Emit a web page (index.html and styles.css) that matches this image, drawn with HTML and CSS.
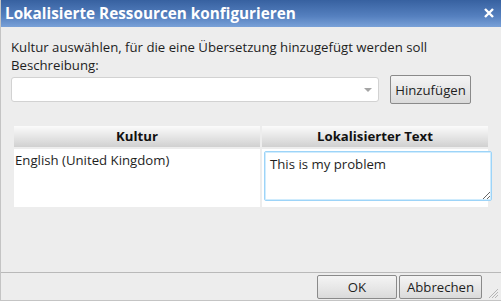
FILE: index.html
```html
<!DOCTYPE html>
<html lang="de">
<head>
    <meta charset="UTF-8">
    <title>Lokalisierte Ressourcen konfigurieren</title>
    <link rel="stylesheet" href="styles.css">
</head>
<body>
    <div class="dialog">
        <div class="titlebar">
            <span class="title">Lokalisierte Ressourcen konfigurieren</span>
            <svg class="close" width="10" height="10" viewBox="0 0 10 10">
                <path d="M1 1 L9 9 M9 1 L1 9" stroke="white" stroke-width="2.4" />
            </svg>
        </div>
        <div class="content">
            <div class="label">Kultur auswählen, für die eine Übersetzung hinzugefügt werden soll<br>Beschreibung:</div>
            <div class="add-row">
                <div class="combo">
                    <span class="arrow"></span>
                </div>
                <button class="btn add-btn">Hinzufügen</button>
            </div>
            <div class="grid">
                <div class="head">Kultur</div>
                <div class="head">Lokalisierter Text</div>
                <div class="cell">English (United Kingdom)</div>
                <div class="cell edit-cell">
                    <textarea class="text-edit">This is my problem</textarea>
                </div>
            </div>
        </div>
        <div class="footer">
            <button class="btn ok-btn">OK</button>
            <button class="btn cancel-btn">Abbrechen</button>
            <svg class="grip" width="12" height="12" viewBox="0 0 12 12">
                <path d="M11 2 L2 11 M11 5 L5 11 M11 8 L8 11" stroke="#b5b5b5" stroke-width="1" />
            </svg>
        </div>
    </div>
</body>
</html>
```

FILE: styles.css
```css
body {
    margin: 0;
    font-family: 'Open Sans', 'Noto Sans', sans-serif;
    font-size: 13.2px;
    color: #1e1e1e;
    background-color: #ededed;
}

.dialog {
    width: 501px;
    height: 301px;
    display: flex;
    flex-direction: column;
    box-sizing: border-box;
    border-left: 1px solid #c4c4c4;
    border-bottom: 1px solid #c4c4c4;
    overflow: hidden;
}

.titlebar {
    height: 27px;
    flex-shrink: 0;
    display: flex;
    align-items: center;
    justify-content: space-between;
    padding: 0 7px 0 5px;
    margin-left: -1px;
    background: linear-gradient(to bottom, #3761a0, #5580bf 60%, #79a1d8);
}

.title {
    color: white;
    font-weight: bold;
    font-size: 15.3px;
    margin-top: -1px;
}

.close {
    margin-top: -2px;
}

.content {
    flex-grow: 1;
    padding: 11px 0 0 10px;
}

.label {
    line-height: 18px;
}

.add-row {
    display: flex;
    align-items: center;
    gap: 11px;
    margin-top: 1px;
}

.combo {
    position: relative;
    width: 366px;
    height: 23px;
    background-color: white;
    border: 1px solid #d2d2d2;
    border-radius: 3px;
}

.arrow {
    position: absolute;
    right: 6px;
    top: 10px;
    border-left: 4px solid transparent;
    border-right: 4px solid transparent;
    border-top: 4px solid #a5a5a5;
}

.btn {
    font-family: 'Open Sans', 'Noto Sans', sans-serif;
    font-size: 13.2px;
    color: #1e1e1e;
    border: 1px solid #8a8a8a;
    border-radius: 2px;
    background: linear-gradient(to bottom, #f4f4f4, #e8e8e8 50%, #dadada);
    padding: 0;
}

.add-btn {
    width: 81px;
    height: 29px;
}

.grid {
    display: grid;
    grid-template-columns: 246px 226px;
    column-gap: 2px;
    row-gap: 2px;
    margin: 22px 0 0 3px;
}

.head {
    height: 21px;
    line-height: 21px;
    text-align: center;
    font-weight: bold;
    color: #111;
    background: linear-gradient(to bottom, #fbfbfb, #e6e6e6 50%, #d0d0d0);
}

.cell {
    height: 58px;
    background-color: white;
    padding: 2px 0 0 1px;
    box-sizing: border-box;
}

.edit-cell {
    padding: 2px 0 0 2px;
    overflow: visible;
}

.text-edit {
    width: 228px;
    height: 50px;
    box-sizing: border-box;
    resize: vertical;
    font-family: 'Open Sans', 'Noto Sans', sans-serif;
    font-size: 13.2px;
    color: #1e1e1e;
    border: 1px solid #9dd4f8;
    box-shadow: inset 0 0 0 1px #d0ecfd;
    border-radius: 2px;
    padding: 3px 5px;
    outline: none;
}

.footer {
    height: 28px;
    flex-shrink: 0;
    border-top: 1px solid #b9b9b9;
    display: flex;
    align-items: center;
    justify-content: flex-end;
    gap: 2px;
    padding-right: 2px;
    box-sizing: border-box;
}

.ok-btn {
    width: 80px;
    height: 24px;
}

.cancel-btn {
    width: 83px;
    height: 24px;
}

.grip {
    margin-left: 3px;
    margin-top: 12px;
}
```
